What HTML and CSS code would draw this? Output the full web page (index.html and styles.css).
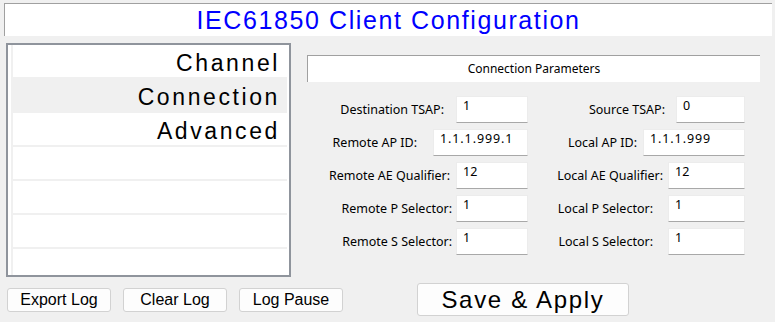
FILE: index.html
```html
<!DOCTYPE html>
<html lang="en">

<head>
    <meta charset="UTF-8">
    <meta name="viewport" content="width=device-width, initial-scale=1.0">
    <title>IEC61850 Client Configuration</title>
    <link rel="stylesheet" href="styles.css">
</head>

<body>
    <div class="title">IEC61850 Client Configuration</div>

    <div class="main">
        <ul class="nav">
            <li>Channel</li>
            <li class="nav_now">Connection</li>
            <li>Advanced</li>
            <li></li>
            <li></li>
            <li></li>
            <li class="last"></li>
        </ul>

        <div class="panel">
            <div class="panel_head">Connection Parameters</div>

            <div class="form">
                <div class="row">
                    <div class="pair left">
                        <span class="label gap12">Destination TSAP:</span>
                        <div class="field w72">1</div>
                    </div>
                    <div class="pair right">
                        <span class="label gap11">Source TSAP:</span>
                        <div class="field w69">0</div>
                    </div>
                </div>
                <div class="row">
                    <div class="pair left">
                        <span class="label gap16">Remote AP ID:</span>
                        <div class="field w95 ids">1.1.1.999.1</div>
                    </div>
                    <div class="pair right">
                        <span class="label gap6">Local AP ID:</span>
                        <div class="field w102 ids">1.1.1.999</div>
                    </div>
                </div>
                <div class="row">
                    <div class="pair left">
                        <span class="label gap6">Remote AE Qualifier:</span>
                        <div class="field w72">12</div>
                    </div>
                    <div class="pair right">
                        <span class="label gap5">Local AE Qualifier:</span>
                        <div class="field w77">12</div>
                    </div>
                </div>
                <div class="row">
                    <div class="pair left">
                        <span class="label gap4">Remote P Selector:</span>
                        <div class="field w72">1</div>
                    </div>
                    <div class="pair right">
                        <span class="label gap15">Local P Selector:</span>
                        <div class="field w77">1</div>
                    </div>
                </div>
                <div class="row">
                    <div class="pair left">
                        <span class="label gap4">Remote S Selector:</span>
                        <div class="field w72">1</div>
                    </div>
                    <div class="pair right">
                        <span class="label gap15">Local S Selector:</span>
                        <div class="field w77">1</div>
                    </div>
                </div>
            </div>
        </div>
    </div>

    <div class="bottom">
        <a class="btn">Export Log</a>
        <a class="btn">Clear Log</a>
        <a class="btn">Log Pause</a>
        <a class="btn save">Save &amp; Apply</a>
    </div>
</body>

</html>
```

FILE: styles.css
```css
* {
    margin: 0;
    padding: 0;
    box-sizing: border-box;
}

li {
    list-style: none;
}

a {
    text-decoration: none;
}

body {
    width: 775px;
    height: 322px;
    overflow: hidden;
    background-color: #f0f0f0;
    font-family: "Liberation Sans", Arial, sans-serif;
    color: #000;
}

.title {
    height: 33px;
    margin: 3px 3px 0 4px;
    border-top: 1px solid #a0a0a0;
    border-left: 1px solid #a0a0a0;
    background-color: #fff;
    color: #0000ff;
    font-size: 25px;
    letter-spacing: 1.6px;
    line-height: 32px;
    text-align: center;
}

.main {
    display: flex;
    margin-top: 7px;
}

/* left menu */
.nav {
    width: 285px;
    height: 234px;
    margin-left: 6px;
    padding: 0 2px 0 3px;
    border: 2px solid #8f949c;
    background-color: #fff;
    overflow: hidden;
}

.nav li {
    height: 34px;
    padding: 2px 7px 0 0;
    border-left: 2px solid #f0f0f0;
    border-bottom: 2px solid #f0f0f0;
    font-size: 23px;
    letter-spacing: 2.6px;
    line-height: 32px;
    text-align: right;
}

.nav .nav_now {
    background-color: #f0f0f0;
}

.nav .last {
    border-bottom: none;
}

/* right panel */
.panel {
    width: 453px;
    margin-left: 16px;
    padding-top: 12px;
    font-family: "Noto Sans", "Open Sans", sans-serif;
    font-size: 12px;
}

.panel_head {
    height: 27px;
    border-top: 1px solid #a0a0a0;
    border-left: 1px solid #a0a0a0;
    background-color: #fff;
    line-height: 25px;
    text-align: center;
}

.form {
    display: flex;
    flex-direction: column;
    gap: 6px;
    padding-top: 14px;
}

.row {
    display: flex;
}

.pair {
    display: flex;
    justify-content: flex-end;
    align-items: center;
}

.pair.left {
    width: 221px;
}

.pair.right {
    width: 217px;
}

.label {
    font-size: 12.5px;
    white-space: nowrap;
}

.gap4 { margin-right: 4px; }
.gap5 { margin-right: 5px; }
.gap6 { margin-right: 6px; }
.gap11 { margin-right: 11px; }
.gap12 { margin-right: 12px; }
.gap15 { margin-right: 15px; }
.gap16 { margin-right: 16px; }

.field {
    height: 27px;
    padding: 1px 0 0 6px;
    border: 1px solid #ececec;
    border-bottom: 1px solid #a8a8a8;
    background-color: #fff;
    font-size: 12.5px;
    line-height: 16px;
}

.field.ids {
    letter-spacing: 0.9px;
}

.w69 { width: 69px; }
.w72 { width: 72px; }
.w77 { width: 77px; }
.w95 { width: 95px; }
.w102 { width: 102px; }

/* bottom buttons */
.bottom {
    display: flex;
    align-items: center;
    gap: 12px;
    margin: 6px 0 0 7px;
}

.btn {
    width: 104px;
    height: 24px;
    border: 1px solid #d2d2d2;
    border-radius: 3px;
    background-color: #fdfdfd;
    color: #000;
    font-size: 16px;
    line-height: 22px;
    text-align: center;
    cursor: pointer;
}

.save {
    width: 212px;
    height: 33px;
    margin-left: 62px;
    font-size: 24px;
    letter-spacing: 1.7px;
    line-height: 31px;
}
```
